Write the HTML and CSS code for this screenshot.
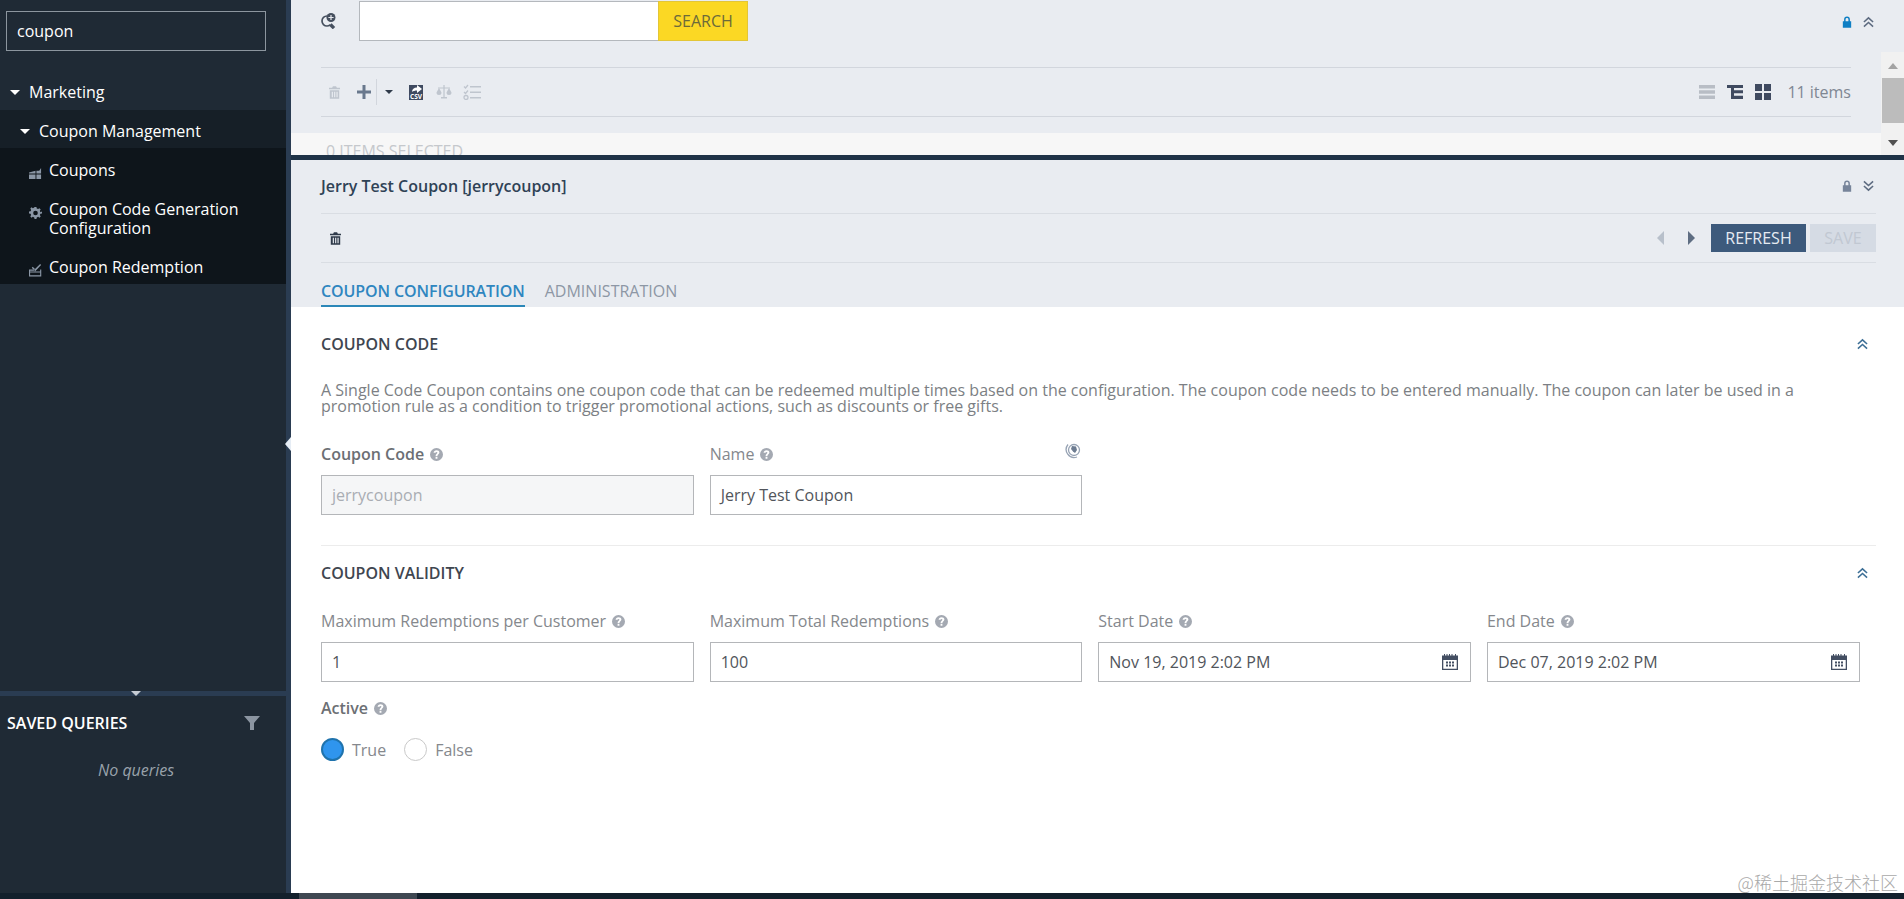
FILE: index.html
```html
<!DOCTYPE html>
<html lang="en">
<head>
    <meta charset="UTF-8">
    <meta name="viewport" content="width=device-width, initial-scale=1.0">
    <title>Coupons</title>
    <link rel="stylesheet" href="styles.css">
</head>
<body>

<svg class="icon-defs" width="0" height="0">
    <defs>
        <symbol id="i-trash" viewBox="0 0 14 16"><path d="M5 0h4l1 2h4v2H0V2h4zM1 5h12v11H1zm2.500 2v7h1.500V7zm3 0v7H8V7zm3 0v7H11V7z" fill-rule="evenodd"/></symbol>
        <symbol id="i-up" viewBox="0 0 12 12"><path d="M1 6l5-4.500L11 6M1 11l5-4.500L11 11" fill="none" stroke="currentColor" stroke-width="1.700"/></symbol>
        <symbol id="i-down" viewBox="0 0 12 12"><path d="M1 1l5 4.500L11 1M1 6l5 4.500L11 6" fill="none" stroke="currentColor" stroke-width="1.700"/></symbol>
        <symbol id="i-lock" viewBox="0 0 12 14"><path d="M2.500 6V4a3.500 3.500 0 0 1 7 0v2H11v8H1V6zm1.800 0h3.400V4a1.700 1.700 0 0 0-3.400 0z" fill-rule="evenodd"/></symbol>
        <symbol id="i-help" viewBox="0 0 14 14"><path d="M7 0a7 7 0 1 1 0 14A7 7 0 0 1 7 0zM6 9.500v2h2v-2zM7 2.500C5.300 2.500 4 3.500 3.900 5.200h2c.1-.6.500-1 1.100-1s1 .3 1 .9c0 1-2 1.200-2 3.600h2c0-1.700 2.100-1.900 2.100-3.800 0-1.500-1.300-2.400-3.100-2.400z" fill-rule="evenodd"/></symbol>
        <symbol id="i-cal" viewBox="0 0 16 16"><path d="M0 1.500h2V0h1v1.500h1.500V0h1v1.500h1.500V0h1v1.500h1.500V0h1v1.500H13V0h1v1.500h2V16H0zM1.300 6v8.700h13.400V6zM4 7.500h2v2H4zm3 0h2v2H7zm3 0h2v2h-2zm-6 3h2v2H4zm3 0h2v2H7zm3 0h2v2h-2z" fill-rule="evenodd"/></symbol>
    </defs>
</svg>

<div class="app">
    <aside class="sidebar">
        <span class="sidebar-handle"></span>
        <div class="nav-search">
            <input class="nav-input" type="text" value="coupon">
        </div>
        <div class="nav-tree">
            <div class="nav-item nav-top"><span class="caret"></span>Marketing</div>
            <div class="nav-item nav-group"><span class="caret"></span>Coupon Management</div>
            <div class="nav-children">
                <div class="nav-item nav-leaf">
                    <svg class="leaf-icon" viewBox="0 0 14 14"><path d="M0 6l7-2v3H0zM8 4l3 0 2-3v6H8zM0 8h7v5H0zM8 8h5v5H8z"/></svg>
                    <span>Coupons</span>
                </div>
                <div class="nav-item nav-leaf">
                    <svg class="leaf-icon" viewBox="0 0 14 14"><path d="M6 1h2l.4 1.700 1.400.6 1.500-.9 1.300 1.300-.9 1.500.6 1.400L14 6v2l-1.700.4-.6 1.400.9 1.500-1.300 1.300-1.500-.9-1.400.6L8 14H6l-.4-1.700-1.400-.6-1.500.9-1.300-1.300.9-1.500-.6-1.400L0 8V6l1.700-.4.6-1.400-.9-1.500 1.300-1.300 1.500.9 1.400-.6zM7 5a2.500 2.500 0 1 0 0 5 2.500 2.500 0 0 0 0-5z" fill-rule="evenodd"/></svg>
                    <span>Coupon Code Generation Configuration</span>
                </div>
                <div class="nav-item nav-leaf">
                    <svg class="leaf-icon" viewBox="0 0 14 14"><path d="M0 6h6v1.200H1.200V8H12V6h1.200v7.500H0zM1.200 9.200v3h10.800v-3zM4 3l2.500 2.500L12 0l1 1-6.500 7L3 4z" fill-rule="evenodd"/></svg>
                    <span>Coupon Redemption</span>
                </div>
            </div>
        </div>
        <div class="sidebar-fill"></div>
        <div class="nav-resizer"><span class="resizer-caret"></span></div>
        <div class="queries">
            <div class="queries-head">
                <span class="queries-title">SAVED QUERIES</span>
                <svg class="queries-filter" viewBox="0 0 16 16"><path d="M0 1h16l-6 7v7H6V8z"/></svg>
            </div>
            <div class="queries-empty">No queries</div>
        </div>
    </aside>

    <main class="main">
        <section class="list-panel">
            <div class="search-row">
                <svg class="search-icon" viewBox="0 0 16 16"><path d="M6 3a5 5 0 0 0 0 10 5 5 0 0 0 2.800-.9l3 3 1.200-1.200-3-3" fill="none" stroke="#46505f" stroke-width="1.700"/><circle cx="10" cy="4.500" r="4.500" fill="#46505f"/><path d="M9.400 2h1.200v2h2v1.100h-2v2H9.400v-2h-2V4h2z" fill="#e9ecf1"/></svg>
                <div class="search-box">
                    <input class="search-input" type="text">
                    <button class="search-btn">SEARCH</button>
                </div>
                <div class="panel-controls">
                    <svg class="ctl-lock lock-on"><use href="#i-lock"/></svg>
                    <svg class="ctl-chev"><use href="#i-up"/></svg>
                </div>
            </div>
            <div class="list-body">
                <div class="list-content">
                    <div class="list-toolbar">
                        <div class="tool-left">
                            <svg class="tool-trash"><use href="#i-trash"/></svg>
                            <svg class="tool-plus" viewBox="0 0 14 14"><path d="M5.500 0h3v5.500H14v3H8.500V14h-3V8.500H0v-3h5.500z"/></svg>
                            <span class="tool-sep"></span>
                            <span class="tool-caret"></span>
                            <svg class="tool-csv" viewBox="0 0 14 16"><path d="M0 1h14v15H0z" fill="#3f4a60"/><path d="M3 8c0-3 2-4.500 5-4.500V1l5 4-5 4V6.500C6 6.500 4 7 3 8z" fill="#fff"/><text x="7" y="15" class="csv-text">CSV</text></svg>
                            <svg class="tool-scale" viewBox="0 0 16 16"><path d="M7.400 1h1.200v12H11v1.500H5V13h2.400zM2 3.500h12v1H2z"/><path d="M3 4L.5 8.500a2.500 2.500 0 0 0 5 0zM13 4l-2.500 4.500a2.500 2.500 0 0 0 5 0z"/></svg>
                            <svg class="tool-check" viewBox="0 0 18 16"><path d="M1 2.500l1.500 1.500L5 1M1 8l1.500 1.500L5 6.500" fill="none" stroke="currentColor" stroke-width="1.300"/><circle cx="3" cy="13.500" r="2" fill="none" stroke="currentColor" stroke-width="1.300"/><path d="M7 2h11v1.400H7zM7 7.500h11v1.400H7zM7 13h11v1.400H7z" fill="currentColor"/></svg>
                        </div>
                        <div class="tool-right">
                            <svg class="view-icon view-off" viewBox="0 0 16 14"><path d="M0 0h16v3.500H0zM0 5.200h16v3.500H0zM0 10.400h16V14H0z"/></svg>
                            <svg class="view-icon" viewBox="0 0 16 14"><path d="M0 0h16v3H7v2.300h9v3H7v2.400h9V14H4V3H0z"/></svg>
                            <svg class="view-icon" viewBox="0 0 16 16"><path d="M0 0h7v7H0zM9 0h7v7H9zM0 9h7v7H0zM9 9h7v7H9z"/></svg>
                            <span class="item-count">11 items</span>
                        </div>
                    </div>
                    <div class="selected-band">0 ITEMS SELECTED</div>
                </div>
                <div class="scrollbar">
                    <span class="scroll-up"></span>
                    <span class="scroll-thumb"></span>
                    <span class="scroll-down"></span>
                </div>
            </div>
        </section>

        <section class="detail-panel">
            <div class="detail-head">
                <div class="detail-title-row">
                    <h1 class="detail-title">Jerry Test Coupon [jerrycoupon]</h1>
                    <div class="detail-controls">
                        <svg class="ctl-lock lock-off"><use href="#i-lock"/></svg>
                        <svg class="ctl-chev"><use href="#i-down"/></svg>
                    </div>
                </div>
                <div class="detail-toolbar">
                    <svg class="detail-trash"><use href="#i-trash"/></svg>
                    <div class="detail-actions">
                        <span class="arrow arrow-prev"></span>
                        <span class="arrow arrow-next"></span>
                        <button class="btn-refresh">REFRESH</button>
                        <button class="btn-save">SAVE</button>
                    </div>
                </div>
                <div class="tabs">
                    <span class="tab tab-active">COUPON CONFIGURATION</span>
                    <span class="tab">ADMINISTRATION</span>
                </div>
            </div>
            <div class="detail-body">
                <div class="form-section section-code">
                    <div class="section-head">
                        <h2 class="section-title">COUPON CODE</h2>
                        <svg class="section-chev"><use href="#i-up"/></svg>
                    </div>
                    <p class="section-text">A Single Code Coupon contains one coupon code that can be redeemed multiple times based on the configuration. The coupon code needs to be entered manually. The coupon can later be used in a promotion rule as a condition to trigger promotional actions, such as discounts or free gifts.</p>
                    <div class="field-grid">
                        <div class="field">
                            <label class="field-label label-strong">Coupon Code <svg class="help"><use href="#i-help"/></svg></label>
                            <div class="field-box box-disabled">jerrycoupon</div>
                        </div>
                        <div class="field">
                            <label class="field-label">Name <svg class="help"><use href="#i-help"/></svg>
                                <svg class="globe" viewBox="0 0 16 16"><circle cx="9" cy="7" r="5.500" fill="none" stroke="#97a3b4" stroke-width="1.300"/><path d="M7 3l4 .5L12 7l-2 3-2-1.500-2-2.500z" fill="#6d7c91"/><path d="M3 1.500a8 8 0 0 0 9 12.500" fill="none" stroke="#97a3b4" stroke-width="1.300"/></svg>
                            </label>
                            <div class="field-box">Jerry Test Coupon</div>
                        </div>
                    </div>
                </div>
                <div class="form-section section-validity">
                    <div class="section-head">
                        <h2 class="section-title">COUPON VALIDITY</h2>
                        <svg class="section-chev"><use href="#i-up"/></svg>
                    </div>
                    <div class="field-grid">
                        <div class="field">
                            <label class="field-label">Maximum Redemptions per Customer <svg class="help"><use href="#i-help"/></svg></label>
                            <div class="field-box">1</div>
                        </div>
                        <div class="field">
                            <label class="field-label">Maximum Total Redemptions <svg class="help"><use href="#i-help"/></svg></label>
                            <div class="field-box">100</div>
                        </div>
                        <div class="field">
                            <label class="field-label">Start Date <svg class="help"><use href="#i-help"/></svg></label>
                            <div class="field-box box-date">Nov 19, 2019 2:02 PM <svg class="cal"><use href="#i-cal"/></svg></div>
                        </div>
                        <div class="field">
                            <label class="field-label">End Date <svg class="help"><use href="#i-help"/></svg></label>
                            <div class="field-box box-date">Dec 07, 2019 2:02 PM <svg class="cal"><use href="#i-cal"/></svg></div>
                        </div>
                    </div>
                    <div class="active-field">
                        <label class="field-label label-strong">Active <svg class="help"><use href="#i-help"/></svg></label>
                        <div class="radios">
                            <span class="radio radio-on"></span><span class="radio-text">True</span>
                            <span class="radio"></span><span class="radio-text">False</span>
                        </div>
                    </div>
                </div>
            </div>
        </section>
    </main>
</div>

<div class="bottom-bar"><span class="bottom-thumb"></span></div>
<div class="watermark">@稀土掘金技术社区</div>

</body>
</html>
```

FILE: styles.css
```css
* {
    box-sizing: border-box;
}
html, body {
    height: 100%;
}
body {
    margin: 0;
    font-family: "Open Sans", "Noto Sans CJK SC", sans-serif;
    font-size: 16px;
    color: #4a4f57;
    background: #fff;
    overflow: hidden;
    display: flex;
    flex-direction: column;
}
.icon-defs {
    display: none;
}
.app {
    display: flex;
    flex: 1;
    min-height: 0;
}

/* sidebar */
.sidebar {
    position: relative;
    width: 291px;
    flex: none;
    display: flex;
    flex-direction: column;
    background: #1f2a35;
    border-right: 5px solid #2a3c52;
    color: #fff;
}
.sidebar-handle {
    position: absolute;
    top: 437px;
    right: -5px;
    width: 0;
    height: 0;
    border-top: 7px solid transparent;
    border-bottom: 7px solid transparent;
    border-right: 6px solid #e6edf5;
}
.nav-search {
    padding: 11px 20px 0 6px;
}
.nav-input {
    display: block;
    width: 260px;
    height: 40px;
    padding: 0 10px;
    background: transparent;
    border: 1px solid #8c969f;
    color: #fff;
    font: 16px "Open Sans", sans-serif;
}
.nav-tree {
    margin-top: 21px;
}
.nav-item {
    display: flex;
    align-items: center;
    font-size: 16px;
    line-height: 19px;
}
.nav-top {
    height: 38px;
    padding: 2px 0 0 10px;
}
.nav-group {
    height: 38px;
    padding: 5px 0 0 20px;
    background: #161f27;
}
.nav-children {
    background: #0e151b;
}
.nav-leaf {
    padding: 13px 30px 7px 29px;
    align-items: flex-start;
    min-height: 39px;
}
.nav-leaf span {
    flex: 1;
}
.leaf-icon {
    width: 13px;
    height: 13px;
    margin: 6px 7px 0 0;
    flex: none;
    fill: #8b97a6;
}
.caret {
    width: 0;
    height: 0;
    margin-right: 9px;
    border-left: 5px solid transparent;
    border-right: 5px solid transparent;
    border-top: 5px solid #fff;
}
.sidebar-fill {
    flex: 1;
}
.nav-resizer {
    height: 5px;
    padding-right: 14px;
    background: #2a3c52;
    display: flex;
    justify-content: center;
}
.resizer-caret {
    width: 0;
    height: 0;
    border-left: 5px solid transparent;
    border-right: 5px solid transparent;
    border-top: 5px solid #c6ccd4;
}
.queries {
    height: 197px;
    padding: 0 21px 0 7px;
}
.queries-head {
    display: flex;
    justify-content: space-between;
    align-items: center;
    height: 36px;
    margin-top: 9px;
    padding-right: 5px;
}
.queries-title {
    font-weight: 600;
    font-size: 16px;
}
.queries-filter {
    width: 16px;
    height: 16px;
    fill: #8b95a1;
}
.queries-empty {
    margin-top: 18px;
    text-align: center;
    font-style: italic;
    color: #99a2ab;
}

/* main column */
.main {
    flex: 1;
    min-width: 0;
    display: flex;
    flex-direction: column;
}
.list-panel {
    height: 160px;
    flex: none;
    background: #e9ecf1;
    border-bottom: 5px solid #1f3347;
    overflow: hidden;
}
.search-row {
    display: flex;
    align-items: flex-start;
    height: 52px;
    padding: 1px 0 0 30px;
}
.search-icon {
    width: 16px;
    height: 16px;
    margin: 12px 22px 0 0;
}
.search-box {
    display: flex;
    width: 389px;
    height: 40px;
}
.search-input {
    width: 299px;
    height: 40px;
    background: #fff;
    border: 1px solid #b4b8bd;
    border-right: 0;
}
.search-btn {
    width: 90px;
    height: 40px;
    background: #fbd824;
    border: 1px solid #e3c637;
    color: #6c6a3a;
    font: 16px "Open Sans", sans-serif;
}
.panel-controls, .detail-controls {
    margin-left: auto;
    display: flex;
    align-items: center;
    gap: 11px;
    padding-right: 30px;
}
.panel-controls {
    height: 42px;
}
.ctl-lock {
    width: 10px;
    height: 12px;
}
.lock-on {
    fill: #0f7fc4;
}
.lock-off {
    fill: #77849a;
}
.ctl-chev {
    width: 11px;
    height: 12px;
    color: #5d6b80;
}
.list-body {
    display: flex;
    height: 103px;
}
.list-content {
    flex: 1;
    min-width: 0;
    padding-top: 15px;
}
.list-toolbar {
    display: flex;
    justify-content: space-between;
    align-items: center;
    height: 50px;
    margin: 0 30px;
    border-top: 1px solid #d2d6dd;
    border-bottom: 1px solid #d2d6dd;
}
.tool-left {
    display: flex;
    align-items: center;
    padding-left: 8px;
}
.tool-trash {
    width: 11px;
    height: 13px;
    fill: #bfc5ce;
}
.tool-plus {
    width: 14px;
    height: 14px;
    margin-left: 17px;
    fill: #69788d;
}
.tool-sep {
    width: 1px;
    height: 26px;
    margin: 0 8px 0 5px;
    background: #d2d6dd;
}
.tool-caret {
    width: 0;
    height: 0;
    border-left: 4px solid transparent;
    border-right: 4px solid transparent;
    border-top: 4px solid #2f3a4a;
}
.tool-csv {
    width: 14px;
    height: 16px;
    margin-left: 16px;
}
.csv-text {
    font: 700 6.500px "Open Sans", sans-serif;
    fill: #fff;
    text-anchor: middle;
}
.tool-scale {
    width: 16px;
    height: 16px;
    margin-left: 13px;
    fill: #bfc5ce;
}
.tool-check {
    width: 18px;
    height: 16px;
    margin-left: 11px;
    color: #bfc5ce;
}
.tool-right {
    display: flex;
    align-items: center;
    gap: 12px;
}
.view-icon {
    width: 16px;
    height: 16px;
    fill: #3f4a60;
}
.view-off {
    fill: #b8bdc5;
}
.item-count {
    margin-left: 4px;
    color: #7f8793;
}
.selected-band {
    height: 23px;
    margin-top: 16px;
    padding: 7px 0 0 35px;
    background: #f7f7f7;
    color: #c5c8cc;
    line-height: 22px;
    white-space: nowrap;
    overflow: hidden;
}
.scrollbar {
    width: 23px;
    flex: none;
    display: flex;
    flex-direction: column;
    align-items: center;
    background: #f1f1f1;
}
.scroll-thumb {
    width: 100%;
    margin: 9px 0 0 2px;
    height: 45px;
    background: #bcbcbc;
}
.scroll-up, .scroll-down {
    width: 0;
    height: 0;
    border-left: 5px solid transparent;
    border-right: 5px solid transparent;
}
.scroll-up {
    margin-top: 11px;
    border-bottom: 6px solid #a3a3a3;
}
.scroll-down {
    margin-top: 17px;
    border-top: 6px solid #505050;
}

/* detail */
.detail-panel {
    flex: 1;
    min-height: 0;
    display: flex;
    flex-direction: column;
}
.detail-head {
    background: #e9ecf1;
    padding: 0 28px 0 30px;
}
.detail-title-row {
    display: flex;
    align-items: center;
    height: 54px;
    padding-bottom: 1px;
    border-bottom: 1px solid #d9dde3;
}
.detail-title {
    margin: 0;
    font-size: 16px;
    font-weight: 600;
    color: #2f4256;
}
.detail-controls {
    padding-right: 2px;
}
.detail-toolbar {
    display: flex;
    align-items: center;
    justify-content: space-between;
    height: 49px;
    border-bottom: 1px solid #d9dde3;
}
.detail-trash {
    width: 11px;
    height: 13px;
    margin-left: 9px;
    fill: #2f3a4a;
}
.detail-actions {
    display: flex;
    align-items: center;
}
.arrow {
    width: 0;
    height: 0;
    border-top: 7px solid transparent;
    border-bottom: 7px solid transparent;
}
.arrow-prev {
    border-right: 7px solid #b8c0cb;
}
.arrow-next {
    margin-left: 24px;
    border-left: 7px solid #5e6d82;
}
.btn-refresh, .btn-save {
    height: 28px;
    border: 0;
    font: 16px "Open Sans", sans-serif;
}
.btn-refresh {
    width: 95px;
    margin-left: 16px;
    background: #3d5a7c;
    color: #e6ebf2;
}
.btn-save {
    width: 66px;
    margin-left: 4px;
    background: #d5dbe4;
    color: #c1c8d2;
}
.tabs {
    display: flex;
    gap: 20px;
    height: 44px;
    padding-top: 12px;
}
.tab {
    height: 32px;
    padding-top: 5px;
    color: #8d97a5;
    line-height: 22px;
}
.tab-active {
    color: #2f86c0;
    font-weight: 600;
    letter-spacing: -0.1px;
    border-bottom: 2px solid #2b87b8;
}
.detail-body {
    flex: 1;
    padding: 0 28px 0 30px;
    background: #fff;
}
.form-section {
    border-bottom: 1px solid #ececec;
}
.section-code {
    height: 239px;
    padding-top: 26px;
}
.section-validity {
    border-bottom: 0;
    padding-top: 16px;
}
.section-head {
    display: flex;
    justify-content: space-between;
    align-items: center;
    height: 22px;
    padding-right: 8px;
}
.section-title {
    margin: 0;
    font-size: 16px;
    font-weight: 600;
    color: #3f4650;
}
.section-chev {
    width: 11px;
    height: 12px;
    color: #3d6f96;
}
.section-text {
    margin: 27px 0 0;
    font-size: 16px;
    line-height: 16px;
    color: #7c7f84;
}
.field-grid {
    display: grid;
    grid-template-columns: repeat(4, 372.67px);
    gap: 16px;
    margin-top: 29px;
}
.section-validity .field-grid {
    margin-top: 26px;
}
.field-label {
    display: flex;
    align-items: center;
    gap: 6px;
    position: relative;
    height: 22px;
    color: #85888d;
}
.label-strong {
    color: #6c6f74;
    font-weight: 600;
}
.help {
    width: 13px;
    height: 13px;
    fill: #a4a9b2;
}
.globe {
    position: absolute;
    right: 1px;
    top: 0;
    width: 16px;
    height: 16px;
}
.field-box {
    display: flex;
    align-items: center;
    justify-content: space-between;
    height: 40px;
    margin-top: 10px;
    padding: 0 10px;
    background: #fff;
    border: 1px solid #b4b6b9;
    color: #51555b;
}
.box-disabled {
    background: #f5f6f7;
    color: #a9adb3;
}
.cal {
    width: 16px;
    height: 16px;
    margin-right: 2px;
    fill: #434e62;
}
.active-field {
    margin-top: 15px;
}
.radios {
    display: flex;
    align-items: center;
    gap: 8px;
    margin-top: 19px;
}
.radio {
    width: 23px;
    height: 23px;
    border-radius: 50%;
    border: 1px solid #c9c9c9;
    background: #fff;
}
.radio-on {
    background: #2f95ee;
    border: 2px solid #1f73ad;
}
.radio-text {
    margin-right: 10px;
    color: #85888d;
}

/* bottom */
.bottom-bar {
    height: 6px;
    flex: none;
    background: #13202c;
    padding-left: 299px;
}
.bottom-thumb {
    display: block;
    width: 118px;
    height: 6px;
    background: #3f4852;
}
.watermark {
    position: absolute;
    right: 6px;
    bottom: 5px;
    font-family: "Noto Sans CJK SC", sans-serif;
    font-size: 18px;
    font-weight: 300;
    line-height: 24px;
    color: #a9a9a9;
}
```
